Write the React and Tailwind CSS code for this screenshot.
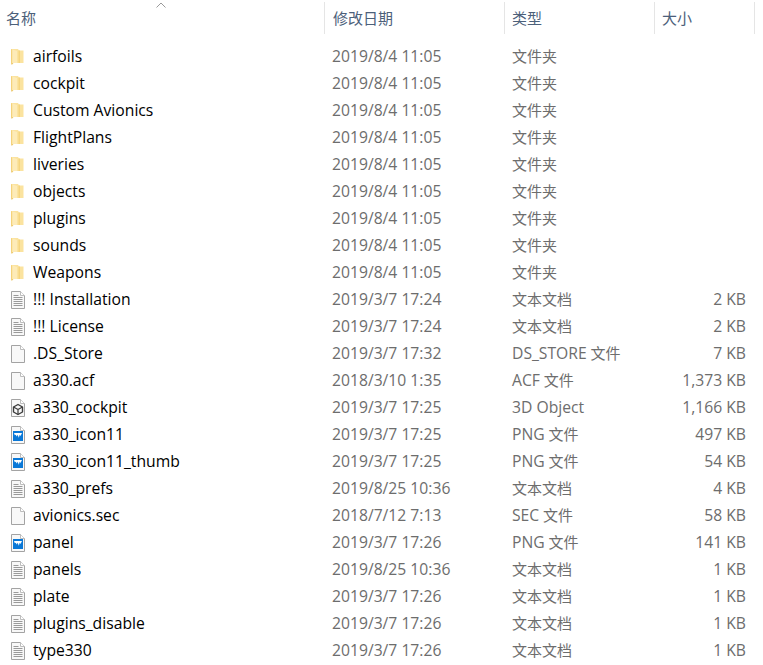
const FONT = "font-['Open_Sans','Noto_Sans_CJK_SC',sans-serif]";

function Folder() {
  return (
    <svg width="16" height="18" viewBox="0 0 16 18" className="block">
      <path d="M1 1h7l1 1.500h4.500V15H1z" fill="#fbe39f" />
      <path d="M8.500 2.500h1.500V15H8.500z" fill="#f6d57f" />
      <path d="M1 1l6 2v12H1z" fill="#fdebb8" />
      <path d="M1 1l1.200 .5V15.500L1 15z" fill="#f5d27a" />
      <path d="M1 15h2.500l-1.800 2z" fill="#ecc76a" />
    </svg>
  );
}

function Sheet({ children }) {
  return (
    <svg width="16" height="18" viewBox="0 0 16 18" className="block">
      <path d="M1.500 .5h9l4 4v13h-13z" fill="#f8f8f8" stroke="#a3a3a3" />
      <path d="M10.500 .5v4h4" fill="#fff" stroke="#bdbdbd" />
      {children}
    </svg>
  );
}

function Text() {
  return (
    <Sheet>
      <path
        d="M3.500 4.500h5M3.500 6.500h9M3.500 8.500h9M3.500 10.500h9M3.500 12.500h9M3.500 14.500h9"
        stroke="#9a9a9a"
      />
    </Sheet>
  );
}

function Blank() {
  return <Sheet />;
}

function Png() {
  return (
    <Sheet>
      <rect x="3" y="5" width="10" height="10" fill="#0a78d7" />
      <path d="M4 7h8l-1.500 3-.8-1.200-.9 3-1.100-3-1 1.800-.9-1.800-1 .500z" fill="#fff" />
    </Sheet>
  );
}

function Obj() {
  return (
    <Sheet>
      <path d="M8 5.500l4.500 2.500v5l-4.500 2.500-4.500-2.500v-5z" fill="none" stroke="#3d3d3d" strokeWidth="1.400" strokeLinejoin="round" />
      <path d="M8 10.500v5M8 10.500L3.500 8M8 10.500L12.500 8" stroke="#3d3d3d" strokeWidth="1.200" />
    </Sheet>
  );
}

function Mixed({ text }) {
  return text.split(/(\s*[\u4e00-\u9fff]+)/).filter(Boolean).map((part, i) =>
    /[\u4e00-\u9fff]/.test(part) ? (
      <span key={i} className="text-[15px]">{part}</span>
    ) : (
      <span key={i}>{part}</span>
    )
  );
}

const rows = [
  ["airfoils", "2019/8/4 11:05", "文件夹", "", Folder],
  ["cockpit", "2019/8/4 11:05", "文件夹", "", Folder],
  ["Custom Avionics", "2019/8/4 11:05", "文件夹", "", Folder],
  ["FlightPlans", "2019/8/4 11:05", "文件夹", "", Folder],
  ["liveries", "2019/8/4 11:05", "文件夹", "", Folder],
  ["objects", "2019/8/4 11:05", "文件夹", "", Folder],
  ["plugins", "2019/8/4 11:05", "文件夹", "", Folder],
  ["sounds", "2019/8/4 11:05", "文件夹", "", Folder],
  ["Weapons", "2019/8/4 11:05", "文件夹", "", Folder],
  ["!!! Installation", "2019/3/7 17:24", "文本文档", "2 KB", Text],
  ["!!! License", "2019/3/7 17:24", "文本文档", "2 KB", Text],
  [".DS_Store", "2019/3/7 17:32", "DS_STORE 文件", "7 KB", Blank],
  ["a330.acf", "2018/3/10 1:35", "ACF 文件", "1,373 KB", Blank],
  ["a330_cockpit", "2019/3/7 17:25", "3D Object", "1,166 KB", Obj],
  ["a330_icon11", "2019/3/7 17:25", "PNG 文件", "497 KB", Png],
  ["a330_icon11_thumb", "2019/3/7 17:25", "PNG 文件", "54 KB", Png],
  ["a330_prefs", "2019/8/25 10:36", "文本文档", "4 KB", Text],
  ["avionics.sec", "2018/7/12 7:13", "SEC 文件", "58 KB", Blank],
  ["panel", "2019/3/7 17:26", "PNG 文件", "141 KB", Png],
  ["panels", "2019/8/25 10:36", "文本文档", "1 KB", Text],
  ["plate", "2019/3/7 17:26", "文本文档", "1 KB", Text],
  ["plugins_disable", "2019/3/7 17:26", "文本文档", "1 KB", Text],
  ["type330", "2019/3/7 17:26", "文本文档", "1 KB", Text],
];

export default function App() {
  return (
    <div className={`w-[763px] h-[665px] overflow-hidden bg-white text-[15.7px] leading-[27px] ${FONT}`}>
      <div className="relative flex h-[32px] mt-[2px] text-[15px] text-[#4c607a]">
        <svg width="10" height="6" viewBox="0 0 10 6" className="absolute left-[156px] top-[0px]">
          <path d="M.5 5.500L5 1l4.500 4.500" fill="none" stroke="#9a9a9a" />
        </svg>
        <div className="w-[325px] border-r border-[#e5e5e5] pl-[6px] pt-[3px]">名称</div>
        <div className="w-[180px] border-r border-[#e5e5e5] pl-[8px] pt-[3px]">修改日期</div>
        <div className="w-[150px] border-r border-[#e5e5e5] pl-[7px] pt-[3px]">类型</div>
        <div className="w-[100px] border-r border-[#e5e5e5] pl-[7px] pt-[3px]">大小</div>
      </div>
      <div className="pt-[9px]">
        {rows.map(([name, date, type, size, Icon]) => (
          <div key={name} className="flex h-[27px]">
            <div className="flex w-[325px] items-center">
              <div className="w-[33px] pl-[10px]">
                <Icon />
              </div>
              <span className="text-black">{name}</span>
            </div>
            <div className="w-[180px] pl-[7px] text-[#6d6d6d]">{date}</div>
            <div className="w-[150px] pl-[7px] text-[#6d6d6d]"><Mixed text={type} /></div>
            <div className="w-[91px] text-right text-[#6d6d6d]">{size}</div>
          </div>
        ))}
      </div>
    </div>
  );
}
